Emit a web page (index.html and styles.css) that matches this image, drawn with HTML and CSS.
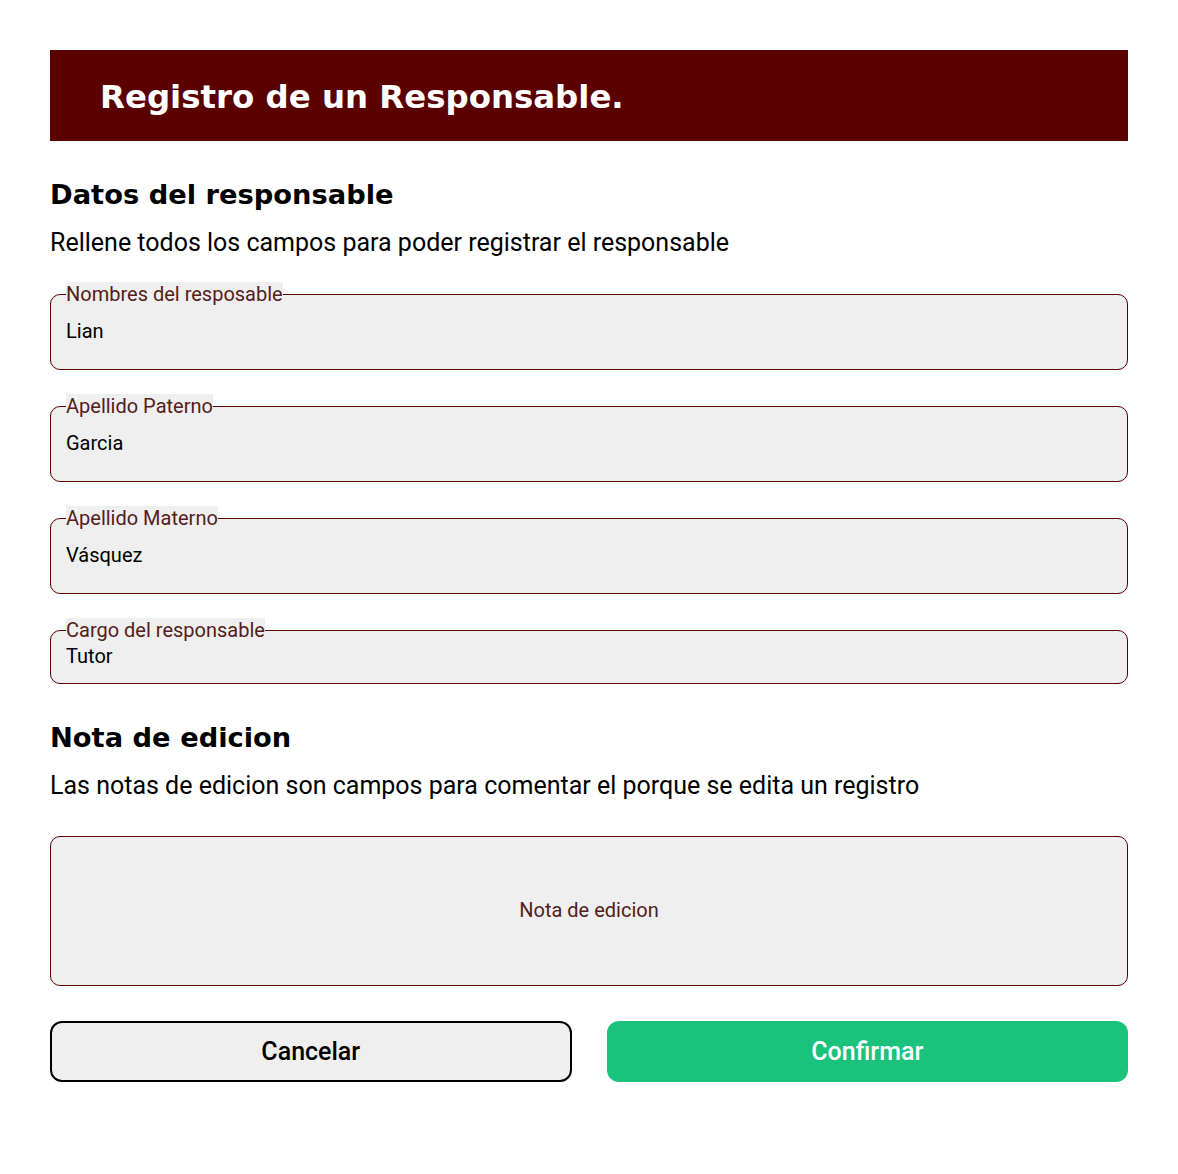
FILE: index.html
```html
<!DOCTYPE html>
<html lang="es">
<head>
<meta charset="utf-8">
<title>Registro de un Responsable</title>
<link rel="stylesheet" href="styles.css">
</head>
<body>
<main class="page">
  <header class="banner">
    <h1 class="banner-title">Registro de un Responsable.</h1>
  </header>

  <section class="section">
    <h2 class="section-title">Datos del responsable</h2>
    <p class="section-text">Rellene todos los campos para poder registrar el responsable</p>

    <div class="fields">
      <fieldset class="field">
        <legend class="field-label">Nombres del resposable</legend>
        <input class="field-input" type="text" value="Lian">
      </fieldset>
      <fieldset class="field">
        <legend class="field-label">Apellido Paterno</legend>
        <input class="field-input" type="text" value="Garcia">
      </fieldset>
      <fieldset class="field">
        <legend class="field-label">Apellido Materno</legend>
        <input class="field-input" type="text" value="Vásquez">
      </fieldset>
      <fieldset class="field field-compact">
        <legend class="field-label">Cargo del responsable</legend>
        <input class="field-input" type="text" value="Tutor">
      </fieldset>
    </div>
  </section>

  <section class="section">
    <h2 class="section-title">Nota de edicion</h2>
    <p class="section-text">Las notas de edicion son campos para comentar el porque se edita un registro</p>
    <textarea class="note" placeholder="Nota de edicion"></textarea>
  </section>

  <div class="actions">
    <button class="btn btn-cancel" type="button">Cancelar</button>
    <button class="btn btn-confirm" type="button">Confirmar</button>
  </div>
</main>
</body>
</html>
```

FILE: styles.css
```css
* { box-sizing: border-box; }

html, body {
  margin: 0;
  padding: 0;
  background: #ffffff;
}

body {
  font-family: Roboto, "Liberation Sans", sans-serif;
  color: #000;
}

.page {
  padding: 50px 50px 60px;
  display: flex;
  flex-direction: column;
}

.banner {
  background: #5b0000;
  height: 91px;
  display: flex;
  align-items: center;
  padding: 0 50px;
}

.banner-title {
  margin: 0;
  color: #fff;
  font-family: "DejaVu Sans", sans-serif;
  font-weight: 700;
  font-size: 32.4px;
  line-height: 40px;
  padding-top: 2px;
}

.section {
  display: flex;
  flex-direction: column;
}

.section-title {
  margin: 37px 0 0;
  font-family: "DejaVu Sans", sans-serif;
  font-weight: 700;
  font-size: 27.3px;
  line-height: 34px;
  color: #000;
}

.section-text {
  margin: 16px 0 0;
  font-size: 25px;
  line-height: 30px;
}

.fields {
  display: flex;
  flex-direction: column;
  gap: 24px;
  margin-top: 24px;
}

.field {
  margin: 0;
  padding: 0 15px 26px;
  border: 1px solid #5c0000;
  border-radius: 10px;
  background: #efefef;
  min-width: 0;
}

.field-label {
  padding: 0;
  font-size: 20px;
  line-height: 24px;
  color: #53201a;
  background: #efefef;
}

.field-input {
  display: block;
  width: 100%;
  margin-top: 13px;
  padding: 0;
  border: 0;
  background: transparent;
  font-family: Roboto, "Liberation Sans", sans-serif;
  font-size: 20px;
  line-height: 24px;
  height: 24px;
  color: #000;
  outline: none;
}

.field-compact { padding-bottom: 15px; }
.field-compact .field-input { margin-top: 2px; }

.note {
  display: block;
  width: 100%;
  height: 150px;
  margin-top: 35px;
  border: 1px solid #5c0000;
  border-radius: 10px;
  background: #efefef;
  resize: none;
  padding: 61px 15px 0;
  text-align: center;
  font-family: Roboto, "Liberation Sans", sans-serif;
  font-size: 20px;
  line-height: 24px;
  color: #000;
  outline: none;
}

.note::placeholder {
  color: #53201a;
  opacity: 1;
}

.actions {
  display: grid;
  grid-template-columns: 1fr 1fr;
  gap: 35px;
  margin-top: 35px;
}

.btn {
  height: 61px;
  border-radius: 12px;
  font-family: Roboto, "Liberation Sans", sans-serif;
  font-weight: 500;
  font-size: 25px;
  cursor: pointer;
}

.btn-cancel {
  background: #efefef;
  border: 2px solid #000;
  color: #000;
}

.btn-confirm {
  background: #1bc27c;
  border: 0;
  color: #fff;
}
```
